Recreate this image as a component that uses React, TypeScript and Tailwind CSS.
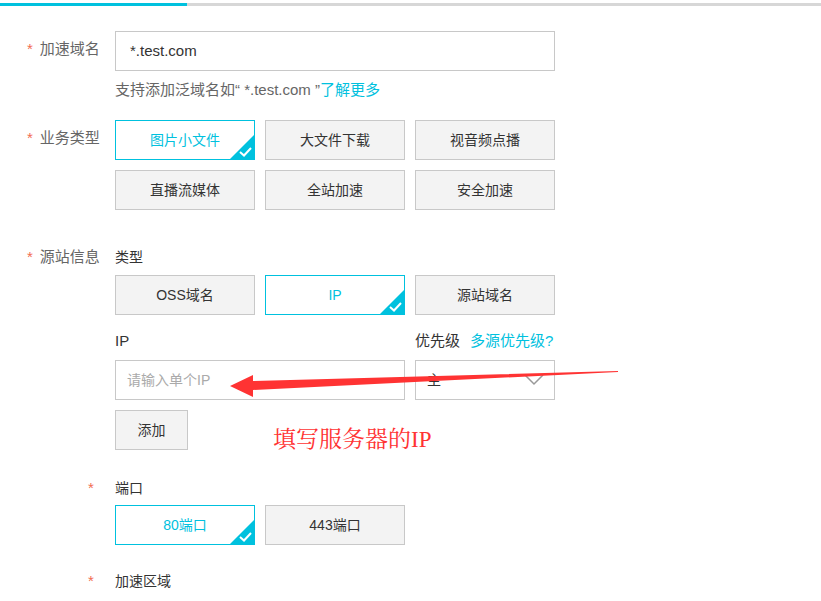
import React from "react";

const FONT = { fontFamily: '"Liberation Sans", "Noto Sans CJK SC", sans-serif' };

function Star({ className = "" }: { className?: string }) {
  return <span className={`text-[#f26c4f] text-[15px] ${className}`}>*</span>;
}

function Choice({ label, selected = false }: { label: string; selected?: boolean }) {
  return (
    <div
      className={`relative flex h-[40px] w-[140px] items-center justify-center overflow-hidden border text-[14px] ${
        selected
          ? "border-[#00c1de] bg-white text-[#00c1de]"
          : "border-[#c8c8c8] bg-[#f3f3f3] text-[#333]"
      }`}
    >
      {label}
      {selected && (
        <svg className="absolute bottom-0 right-0" width="24" height="24" viewBox="0 0 24 24">
          <polygon points="24,0 24,24 0,24" fill="#00c1de" />
          <polyline points="10,17 14,20.5 21,13" fill="none" stroke="#fff" strokeWidth="2" />
        </svg>
      )}
    </div>
  );
}

export default function App() {
  return (
    <div className="relative h-[601px] w-[821px] overflow-hidden bg-white" style={FONT}>
      <div className="mt-[3px] flex h-[3px]">
        <div className="w-[187px] bg-[#00c1de]" />
        <div className="flex-1 bg-[#d7d7d7]" />
      </div>

      {/* 加速域名 */}
      <div className="mt-[25px] flex">
        <div className="w-[115px] pl-[27px] pt-[7px] text-[15px] leading-[22px] text-[#666]">
          <Star className="mr-[7px]" />
          加速域名
        </div>
        <div>
          <div className="flex h-[40px] w-[440px] items-center border border-[#c8c8c8] px-[14px] text-[15px] text-[#333]">
            *.test.com
          </div>
          <div className="mt-[8px] text-[15px] leading-[22px] text-[#666]">
            支持添加泛域名如“ *.test.com ”<span className="text-[#00c1de]">了解更多</span>
          </div>
        </div>
      </div>

      {/* 业务类型 */}
      <div className="mt-[19px] flex">
        <div className="w-[115px] pl-[27px] pt-[7px] text-[15px] leading-[22px] text-[#666]">
          <Star className="mr-[7px]" />
          业务类型
        </div>
        <div className="grid grid-cols-[140px_140px_140px] gap-[10px]">
          <Choice label="图片小文件" selected />
          <Choice label="大文件下载" />
          <Choice label="视音频点播" />
          <Choice label="直播流媒体" />
          <Choice label="全站加速" />
          <Choice label="安全加速" />
        </div>
      </div>

      {/* 源站信息 */}
      <div className="mt-[36px] flex">
        <div className="w-[115px] pl-[27px] text-[15px] leading-[22px] text-[#666]">
          <Star className="mr-[7px]" />
          源站信息
        </div>
        <div className="text-[14px] leading-[20px] text-[#333]">
          <div className="pt-[1px]">类型</div>
          <div className="mt-[8px] flex gap-[10px]">
            <Choice label="OSS域名" />
            <Choice label="IP" selected />
            <Choice label="源站域名" />
          </div>
          <div className="mt-[16px] flex text-[15px]">
            <div className="w-[300px]">IP</div>
            <div>
              优先级<span className="ml-[10px] text-[#00c1de]">多源优先级?</span>
            </div>
          </div>
          <div className="mt-[9px] flex gap-[10px]">
            <div className="flex h-[40px] w-[290px] items-center border border-[#c8c8c8] px-[11px] text-[#aaa]">
              请输入单个IP
            </div>
            <div className="flex h-[40px] w-[140px] items-center justify-between border border-[#c8c8c8] pl-[11px] pr-[10px] text-[#333]">
              主
              <svg width="20" height="12" viewBox="0 0 20 12">
                <polyline points="1,1 10,10 19,1" fill="none" stroke="#999" strokeWidth="1.5" />
              </svg>
            </div>
          </div>
          <div className="mt-[10px] flex h-[40px] w-[73px] items-center justify-center border border-[#c8c8c8] bg-[#f3f3f3]">
            添加
          </div>

          <div className="relative mt-[28px]">
            <Star className="absolute left-[-27px] top-0" />
            端口
          </div>
          <div className="mt-[7px] flex gap-[10px]">
            <Choice label="80端口" selected />
            <Choice label="443端口" />
          </div>

          <div className="relative mt-[26px]">
            <Star className="absolute left-[-27px] top-0" />
            加速区域
          </div>
        </div>
      </div>

      {/* annotation */}
      <div
        className="absolute left-[273px] top-[425px] text-[23px] leading-[30px] text-[#f33]"
        style={{ fontFamily: '"Liberation Serif", "Noto Serif CJK SC", "Noto Sans CJK SC", serif' }}
      >
        填写服务器的IP
      </div>
      <svg className="absolute left-0 top-0" width="821" height="601" viewBox="0 0 821 601">
        <polygon
          points="618,371 253,381 253,375 230,386 253,397 253,390 618,372"
          fill="#f33"
        />
      </svg>
    </div>
  );
}
